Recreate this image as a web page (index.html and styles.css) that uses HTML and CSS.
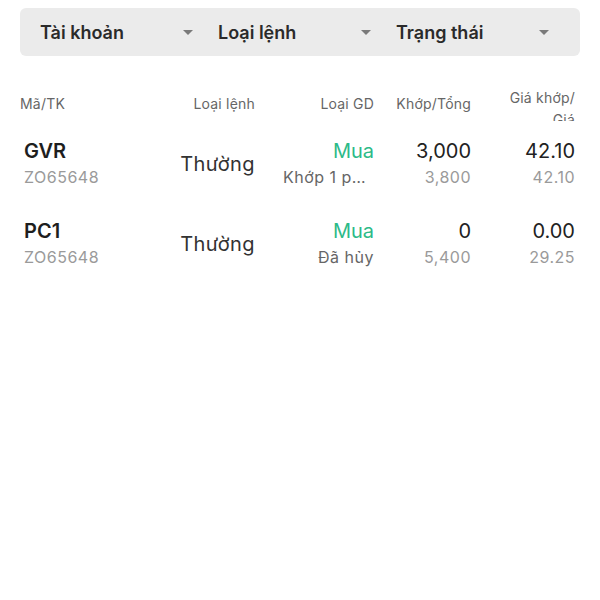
FILE: index.html
```html
<!DOCTYPE html>
<html lang="vi">
<head>
    <meta charset="UTF-8">
    <meta name="viewport" content="width=device-width, initial-scale=1.0">
    <title>Sổ lệnh</title>
    <link rel="stylesheet" href="styles.css">
</head>
<body>
    <div class="filters">
        <div class="filter"><span>Tài khoản</span><i class="caret"></i></div>
        <div class="filter"><span>Loại lệnh</span><i class="caret"></i></div>
        <div class="filter"><span>Trạng thái</span><i class="caret"></i></div>
    </div>

    <div class="table">
        <div class="head">
            <div class="cell left">Mã/TK</div>
            <div class="cell">Loại lệnh</div>
            <div class="cell">Loại GD</div>
            <div class="cell">Khớp/Tổng</div>
            <div class="cell wrap">Giá khớp/ Giá</div>
        </div>

        <div class="row">
            <div class="cell left">
                <div class="symbol">GVR</div>
                <div class="sub">ZO65648</div>
            </div>
            <div class="cell type">Thường</div>
            <div class="cell">
                <div class="side buy">Mua</div>
                <div class="status">Khớp 1 phần</div>
            </div>
            <div class="cell">
                <div class="num">3,000</div>
                <div class="sub">3,800</div>
            </div>
            <div class="cell">
                <div class="num">42.10</div>
                <div class="sub">42.10</div>
            </div>
        </div>

        <div class="row">
            <div class="cell left">
                <div class="symbol">PC1</div>
                <div class="sub">ZO65648</div>
            </div>
            <div class="cell type">Thường</div>
            <div class="cell">
                <div class="side buy">Mua</div>
                <div class="status">Đã hủy</div>
            </div>
            <div class="cell">
                <div class="num">0</div>
                <div class="sub">5,400</div>
            </div>
            <div class="cell">
                <div class="num">0.00</div>
                <div class="sub">29.25</div>
            </div>
        </div>
    </div>
</body>
</html>
```

FILE: styles.css
```css
body {
    margin: 0;
    background: #fff;
    font-family: Inter, "Noto Sans", sans-serif;
    color: #222;
}

.filters {
    display: grid;
    grid-template-columns: repeat(3, 178px);
    margin: 8px 20px 0;
    padding: 0 6px 0 20px;
    height: 48px;
    background: #ebebeb;
    border-radius: 6px;
}
.filter {
    display: flex;
    align-items: center;
    justify-content: space-between;
    padding: 1px 25px 0 0;
    font-size: 18px;
    font-weight: 600;
    color: #2a2a2a;
}
.caret {
    width: 0;
    height: 0;
    border-left: 5px solid transparent;
    border-right: 5px solid transparent;
    border-top: 5px solid #7a7a7a;
}

.table { margin-top: 31px; padding: 0 25px 0 20px; }
.head, .row {
    display: grid;
    grid-template-columns: 130px 105px 119px 97px 104px;
}
.head {
    height: 34px;
    overflow: hidden;
    margin-bottom: 3px;
    font-size: 14px;
    letter-spacing: 0.2px;
    color: #666;
}
.head .cell { line-height: 34px; text-align: right; }
.head .cell.left { text-align: left; }
.head .cell.wrap { line-height: 22px; padding-left: 30px; }

.row { padding: 14px 0; }
.row .cell {
    display: flex;
    flex-direction: column;
    justify-content: center;
    align-items: flex-end;
    line-height: 26px;
    min-width: 0;
}
.row .cell.left { align-items: flex-start; padding-left: 4px; }

.symbol { font-size: 20px; font-weight: 600; color: #1e1e1e; }
.sub { font-size: 16px; letter-spacing: 0.5px; color: #9a9a9a; }
.type { font-size: 20px; letter-spacing: 0.4px; color: #333; }
.side { font-size: 20px; }
.buy { color: #2dba88; }
.status {
    font-size: 16px;
    letter-spacing: 0.5px;
    color: #666;
    max-width: 91px;
    white-space: nowrap;
    overflow: hidden;
    text-overflow: ellipsis;
}
.num { font-size: 20px; color: #222; }
```
